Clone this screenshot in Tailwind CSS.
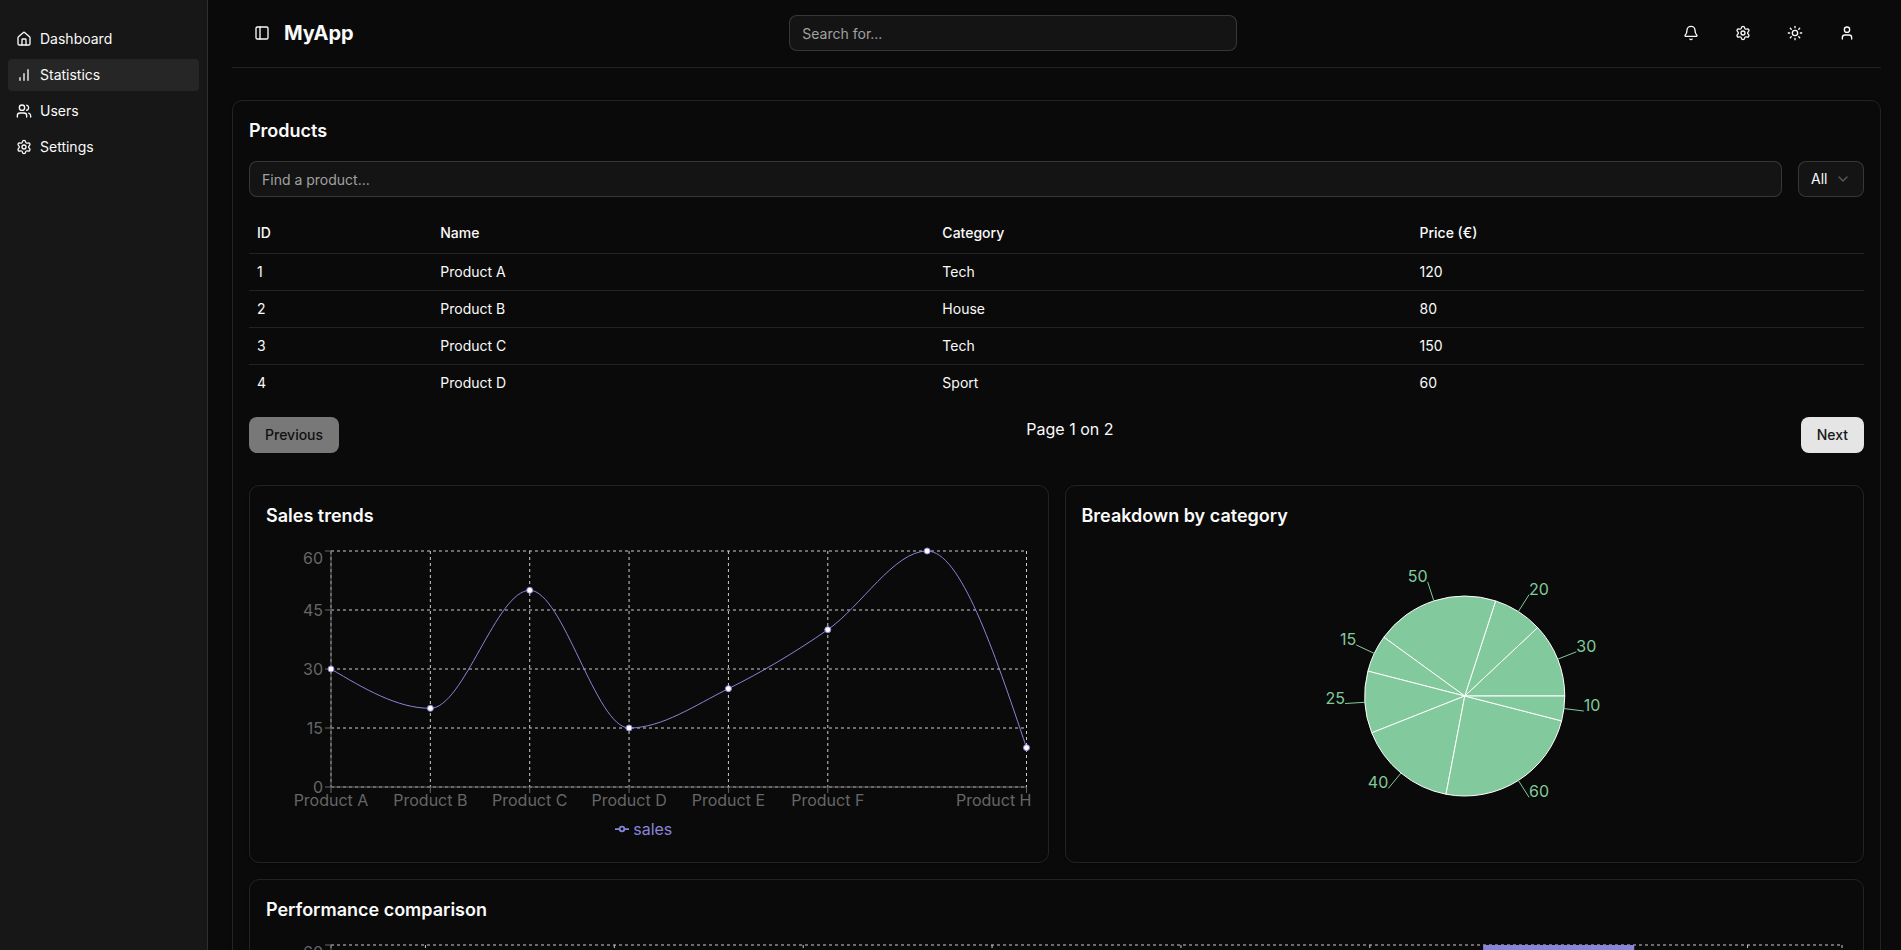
<!DOCTYPE html>
<html lang="en">
<head>
<meta charset="utf-8">
<meta name="viewport" content="width=device-width, initial-scale=1">
<title>MyApp</title>
<script src="https://cdn.jsdelivr.net/npm/@tailwindcss/browser@4"></script>
</head>
<body class="flex h-screen overflow-hidden bg-[#0a0a0a] font-['Inter',sans-serif] text-base text-neutral-50">

<!-- Shared icon shapes -->
<svg class="hidden" aria-hidden="true">
  <symbol id="i-house" viewBox="0 0 24 24"><path d="M15 21v-8a1 1 0 0 0-1-1h-4a1 1 0 0 0-1 1v8"/><path d="M3 10a2 2 0 0 1 .709-1.528l7-5.999a2 2 0 0 1 2.582 0l7 5.999A2 2 0 0 1 21 10v9a2 2 0 0 1-2 2H5a2 2 0 0 1-2-2z"/></symbol>
  <symbol id="i-bars" viewBox="0 0 24 24"><path d="M12 20V10M18 20V4M6 20v-4"/></symbol>
  <symbol id="i-users" viewBox="0 0 24 24"><path d="M16 21v-2a4 4 0 0 0-4-4H6a4 4 0 0 0-4 4v2"/><circle cx="9" cy="7" r="4"/><path d="M22 21v-2a4 4 0 0 0-3-3.87M16 3.13a4 4 0 0 1 0 7.75"/></symbol>
  <symbol id="i-gear" viewBox="0 0 24 24"><path d="M9.671 4.136a2.34 2.34 0 0 1 4.659 0 2.34 2.34 0 0 0 3.319 1.915 2.34 2.34 0 0 1 2.33 4.033 2.34 2.34 0 0 0 0 3.831 2.34 2.34 0 0 1-2.33 4.033 2.34 2.34 0 0 0-3.319 1.915 2.34 2.34 0 0 1-4.659 0 2.34 2.34 0 0 0-3.32-1.915 2.34 2.34 0 0 1-2.33-4.033 2.34 2.34 0 0 0 0-3.831A2.34 2.34 0 0 1 6.35 6.051a2.34 2.34 0 0 0 3.319-1.915"/><circle cx="12" cy="12" r="3"/></symbol>
  <symbol id="i-panel" viewBox="0 0 24 24"><rect width="18" height="18" x="3" y="3" rx="2"/><path d="M9 3v18"/></symbol>
  <symbol id="i-bell" viewBox="0 0 24 24"><path d="M10.268 21a2 2 0 0 0 3.464 0"/><path d="M3.262 15.326A1 1 0 0 0 4 17h16a1 1 0 0 0 .74-1.673C19.41 13.956 18 12.499 18 8A6 6 0 0 0 6 8c0 4.499-1.411 5.956-2.738 7.326"/></symbol>
  <symbol id="i-sun" viewBox="0 0 24 24"><circle cx="12" cy="12" r="4"/><path d="M12 2v2M12 20v2M4.93 4.93l1.41 1.41M17.66 17.66l1.41 1.41M2 12h2M20 12h2M6.34 17.66l-1.41 1.41M19.07 4.93l-1.41 1.41"/></symbol>
  <symbol id="i-user" viewBox="0 0 24 24"><path d="M19 21v-2a4 4 0 0 0-4-4H9a4 4 0 0 0-4 4v2"/><circle cx="12" cy="7" r="4"/></symbol>
  <symbol id="i-chevron" viewBox="0 0 24 24"><path d="m6 9 6 6 6-6"/></symbol>
</svg>

<aside class="w-52 shrink-0 border-r border-white/10 bg-neutral-900 px-2 pt-[23px]">
  <nav aria-label="Main">
    <ul class="flex flex-col gap-1 text-sm">
      <li><a href="#" class="flex h-8 items-center gap-2 rounded-md px-2"><svg class="size-4 fill-none stroke-current stroke-2 [stroke-linecap:round] [stroke-linejoin:round]"><use href="#i-house"/></svg>Dashboard</a></li>
      <li><a href="#" aria-current="page" class="flex h-8 items-center gap-2 rounded-sm bg-neutral-800 px-2"><svg class="size-4 fill-none stroke-current stroke-2 [stroke-linecap:round] [stroke-linejoin:round]"><use href="#i-bars"/></svg>Statistics</a></li>
      <li><a href="#" class="flex h-8 items-center gap-2 rounded-md px-2"><svg class="size-4 fill-none stroke-current stroke-2 [stroke-linecap:round] [stroke-linejoin:round]"><use href="#i-users"/></svg>Users</a></li>
      <li><a href="#" class="flex h-8 items-center gap-2 rounded-md px-2"><svg class="size-4 fill-none stroke-current stroke-2 [stroke-linecap:round] [stroke-linejoin:round]"><use href="#i-gear"/></svg>Settings</a></li>
    </ul>
  </nav>
</aside>

<main class="min-w-0 flex-1 overflow-y-auto pr-5 pl-6 [scrollbar-width:none]">
  <header class="flex items-center justify-between border-b border-white/10 px-4 pt-[15px] pb-4">
    <div class="flex items-center gap-2">
      <button type="button" aria-label="Toggle sidebar" class="grid size-7 place-items-center rounded-md"><svg class="size-4 fill-none stroke-current stroke-2 [stroke-linecap:round] [stroke-linejoin:round]"><use href="#i-panel"/></svg></button>
      <h1 class="text-xl font-bold">MyApp</h1>
    </div>
    <input type="search" aria-label="Search" placeholder="Search for..." class="h-9 w-full max-w-md rounded-lg border border-white/15 bg-white/[0.045] px-3 text-sm placeholder:text-[#a1a1a1]">
    <div class="flex gap-4">
      <button type="button" aria-label="Notifications" class="grid size-9 place-items-center rounded-md"><svg class="size-4 fill-none stroke-current stroke-2 [stroke-linecap:round] [stroke-linejoin:round]"><use href="#i-bell"/></svg></button>
      <button type="button" aria-label="Settings" class="grid size-9 place-items-center rounded-md"><svg class="size-4 fill-none stroke-current stroke-2 [stroke-linecap:round] [stroke-linejoin:round]"><use href="#i-gear"/></svg></button>
      <button type="button" aria-label="Toggle theme" class="grid size-9 place-items-center rounded-md"><svg class="size-4 fill-none stroke-current stroke-2 [stroke-linecap:round] [stroke-linejoin:round]"><use href="#i-sun"/></svg></button>
      <button type="button" aria-label="Account" class="grid size-9 place-items-center rounded-md"><svg class="size-4 fill-none stroke-current stroke-2 [stroke-linecap:round] [stroke-linejoin:round]"><use href="#i-user"/></svg></button>
    </div>
  </header>

  <section class="my-8 rounded-[10px] border border-white/10 p-4 shadow-sm">
    <h2 class="mb-4 text-lg font-semibold">Products</h2>
    <div class="mb-4 flex gap-4">
      <input type="text" aria-label="Find a product" placeholder="Find a product..." class="h-9 min-w-0 flex-1 rounded-lg border border-white/15 bg-white/[0.045] px-3 text-sm placeholder:text-[#a1a1a1]">
      <div class="relative">
        <select aria-label="Category" class="h-9 w-[66px] appearance-none rounded-lg border border-white/15 bg-white/[0.045] pl-3 text-sm">
          <option>All</option><option>Tech</option><option>House</option><option>Sport</option>
        </select>
        <svg class="pointer-events-none absolute top-2.5 right-[13px] size-4 fill-none stroke-[#a1a1a1] stroke-2 opacity-50 [stroke-linecap:round] [stroke-linejoin:round]"><use href="#i-chevron"/></svg>
      </div>
    </div>

    <table class="mb-4 w-full text-left text-sm">
      <thead>
        <tr class="h-10 border-b border-white/10"><th class="px-2 font-medium">ID</th><th class="px-2 font-medium">Name</th><th class="px-2 font-medium">Category</th><th class="px-2 font-medium">Price (€)</th></tr>
      </thead>
      <tbody>
        <tr class="border-b border-white/10"><td class="p-2">1</td><td class="p-2">Product A</td><td class="p-2">Tech</td><td class="p-2">120</td></tr>
        <tr class="border-b border-white/10"><td class="p-2">2</td><td class="p-2">Product B</td><td class="p-2">House</td><td class="p-2">80</td></tr>
        <tr class="border-b border-white/10"><td class="p-2">3</td><td class="p-2">Product C</td><td class="p-2">Tech</td><td class="p-2">150</td></tr>
        <tr><td class="p-2">4</td><td class="p-2">Product D</td><td class="p-2">Sport</td><td class="p-2">60</td></tr>
      </tbody>
    </table>

    <div class="mb-8 flex justify-between">
      <button type="button" disabled class="h-9 rounded-lg bg-neutral-200 px-4 text-sm font-medium text-neutral-900 opacity-50">Previous</button>
      <span>Page 1 on 2</span>
      <button type="button" class="h-9 rounded-lg bg-neutral-200 px-4 text-sm font-medium text-neutral-900">Next</button>
    </div>

    <div class="grid grid-cols-2 gap-4">
      <section class="min-w-0 rounded-[10px] border border-white/10 p-4 shadow-sm">
        <h2 class="mb-4 text-lg font-semibold">Sales trends</h2>
        <div class="h-[300px]">
          <svg id="line" class="block h-[271px] w-full overflow-visible text-base" role="img" aria-label="Sales per product, line chart"></svg>
          <div class="flex h-6 items-center justify-center gap-1 pr-2.5 text-[#8884d8]">
            <svg class="size-3.5 fill-none stroke-current" viewBox="0 0 32 32" stroke-width="4"><path d="M0 16h10.667a5.333 5.333 0 0 1 10.666 0H32M21.333 16a5.333 5.333 0 0 1-10.666 0"/></svg>
            <span>sales</span>
          </div>
        </div>
      </section>
      <section class="min-w-0 rounded-[10px] border border-white/10 p-4 shadow-sm">
        <h2 class="mb-4 text-lg font-semibold">Breakdown by category</h2>
        <svg id="pie" class="block h-[300px] w-full text-base" role="img" aria-label="Breakdown by category, pie chart"></svg>
      </section>
      <section class="col-span-2 min-w-0 rounded-[10px] border border-white/10 p-4 shadow-sm">
        <h2 class="mb-4 text-lg font-semibold">Performance comparison</h2>
        <svg id="bar" class="block h-[300px] w-full text-base" role="img" aria-label="Performance comparison, bar chart"></svg>
      </section>
    </div>
  </section>
</main>

<script>
  const sales = [30, 20, 50, 15, 25, 40, 60, 10];
  const names = ['A', 'B', 'C', 'D', 'E', 'F', 'G', 'H'].map(n => 'Product ' + n);
  const TOP = 5, BOTTOM = 241, LEFT = 65;
  const yOf = v => BOTTOM - v / 60 * (BOTTOM - TOP);
  const line = (x1, y1, x2, y2, attrs) => `<line x1="${x1}" y1="${y1}" x2="${x2}" y2="${y2}" ${attrs}/>`;
  const text = (x, y, anchor, fill, s) => `<text x="${x}" y="${y}" text-anchor="${anchor}" fill="${fill}">${s}</text>`;

  function axes(right, xs, gridXs, hidden) {
    const grid = 'stroke="#ccc" stroke-dasharray="3 3"', axis = 'stroke="#666"';
    let out = '';
    for (const v of [0, 15, 30, 45, 60]) out += line(LEFT, yOf(v), right, yOf(v), grid);
    for (const x of gridXs) out += line(x, TOP, x, BOTTOM, grid);
    out += line(LEFT, BOTTOM, right, BOTTOM, axis) + line(LEFT, TOP, LEFT, BOTTOM, axis);
    for (const v of [0, 15, 30, 45, 60]) {
      out += line(LEFT - 6, yOf(v), LEFT, yOf(v), axis);
      // the topmost label is moved down so that it stays inside the drawing
      out += text(LEFT - 8, yOf(v) + (v === 60 ? 13 : 6), 'end', '#666', v);
    }
    xs.forEach((x, i) => {
      if (hidden.includes(i)) return;
      out += line(x, BOTTOM, x, BOTTOM + 6, axis);
      const last = x + 37 > right + 5;
      out += text(last ? right + 5 : x, BOTTOM + 19, last ? 'end' : 'middle', '#666', names[i]);
    });
    return out;
  }

  // Monotone cubic interpolation through evenly spaced points
  function curve(p) {
    const n = p.length, s = [], t = [];
    for (let i = 0; i < n - 1; i++) s.push((p[i + 1][1] - p[i][1]) / (p[i + 1][0] - p[i][0]));
    for (let i = 1; i < n - 1; i++) {
      const a = s[i - 1], b = s[i];
      t[i] = (Math.sign(a) + Math.sign(b)) * Math.min(Math.abs(a), Math.abs(b), Math.abs(a + b) / 4) || 0;
    }
    t[0] = (3 * s[0] - t[1]) / 2;
    t[n - 1] = (3 * s[n - 2] - t[n - 2]) / 2;
    let d = `M${p[0]}`;
    for (let i = 0; i < n - 1; i++) {
      const h = (p[i + 1][0] - p[i][0]) / 3;
      d += `C${p[i][0] + h},${p[i][1] + h * t[i]},${p[i + 1][0] - h},${p[i + 1][1] - h * t[i + 1]},${p[i + 1]}`;
    }
    return d;
  }

  function drawLine(svg, width) {
    const right = width - 5;
    const xs = sales.map((_, i) => LEFT + i * (right - LEFT) / 7);
    const pts = sales.map((v, i) => [xs[i], yOf(v)]);
    svg.innerHTML = axes(right, xs, xs.filter((_, i) => i !== 6), [6])
      + `<path d="${curve(pts)}" fill="none" stroke="#8884d8"/>`
      + pts.map(([x, y]) => `<circle cx="${x}" cy="${y}" r="3" fill="#fff" stroke="#8884d8"/>`).join('');
  }

  function drawBar(svg, width) {
    const right = width - 5, band = (right - LEFT) / 8;
    const xs = sales.map((_, i) => LEFT + (i + .5) * band);
    svg.innerHTML = axes(right, xs, [LEFT, ...xs, right], [])
      + sales.map((v, i) => `<rect x="${LEFT + (i + .1) * band}" y="${yOf(v)}" width="${band * .8}" height="${BOTTOM - yOf(v)}" fill="#8884d8"/>`).join('');
  }

  function drawPie(svg, width) {
    const cx = width / 2, cy = 150;
    const total = sales.reduce((a, b) => a + b, 0);
    const at = (r, share) => [cx + r * Math.cos(share * 2 * Math.PI), cy - r * Math.sin(share * 2 * Math.PI)];
    let sum = 0, slices = '', labels = '';
    for (const v of sales) {
      const a = sum / total, b = (sum + v) / total, m = (a + b) / 2;
      sum += v;
      slices += `<path d="M${cx},${cy}L${at(100, a)}A100,100,0,0,0,${at(100, b)}Z" fill="#82ca9d" stroke="#fff"/>`;
      const [x1, y1] = at(100, m), [x2, y2] = at(120, m);
      labels += line(x1, y1, x2, y2, 'stroke="#82ca9d"') + text(x2, y2, x2 > cx ? 'start' : 'end', '#82ca9d', v);
    }
    svg.innerHTML = slices + labels;
  }

  // Each chart is redrawn whenever its box changes size
  const painters = { line: drawLine, pie: drawPie, bar: drawBar };
  const observer = new ResizeObserver(entries => {
    for (const { target } of entries) {
      const width = target.getBoundingClientRect().width;
      if (width > 100) painters[target.id](target, width);
    }
  });
  for (const id in painters) observer.observe(document.getElementById(id));
</script>
</body>
</html>
